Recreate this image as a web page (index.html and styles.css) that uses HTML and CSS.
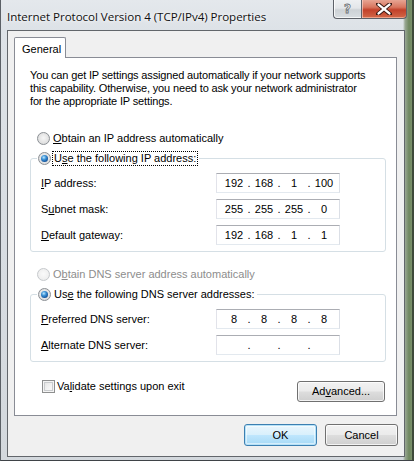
FILE: index.html
```html
<!DOCTYPE html>
<html>
<head>
<meta charset="utf-8">
<title>Internet Protocol Version 4 (TCP/IPv4) Properties</title>
<link rel="stylesheet" href="styles.css">
</head>
<body>
<div class="window">
  <div class="titlebar">
    <span class="title">Internet Protocol Version 4 (TCP/IPv4) Properties</span>
    <div class="caption-btns">
      <div class="cbtn help"><span>?</span></div>
      <div class="cbtn close">
        <svg width="16" height="12" viewBox="0 0 16 12"><path d="M2 1 L14 11 M14 1 L2 11" stroke="#3a1a14" stroke-width="4.2" stroke-linecap="round"/><path d="M2.6 1.6 L13.4 10.4 M13.4 1.6 L2.6 10.4" stroke="#ffffff" stroke-width="2.4" stroke-linecap="round"/></svg>
      </div>
    </div>
  </div>
  <div class="client">
    <div class="tabs"><div class="tab">General</div></div>
    <div class="page">
      <p class="intro">You can get IP settings assigned automatically if your network supports<br>this capability. Otherwise, you need to ask your network administrator<br>for the appropriate IP settings.</p>

      <div class="radio-row first"><span class="radio"></span><span class="rtext"><u>O</u>btain an IP address automatically</span></div>

      <fieldset class="group ip-group">
        <legend><span class="radio checked"></span><span class="rtext focus">U<u>s</u>e the following IP address:</span></legend>
        <div class="fields">
          <span class="flabel"><u>I</u>P address:</span>
          <div class="ipbox"><span class="oct">192</span><span class="dot">.</span><span class="oct">168</span><span class="dot">.</span><span class="oct">1</span><span class="dot">.</span><span class="oct">100</span></div>
          <span class="flabel">S<u>u</u>bnet mask:</span>
          <div class="ipbox"><span class="oct">255</span><span class="dot">.</span><span class="oct">255</span><span class="dot">.</span><span class="oct">255</span><span class="dot">.</span><span class="oct">0</span></div>
          <span class="flabel"><u>D</u>efault gateway:</span>
          <div class="ipbox"><span class="oct">192</span><span class="dot">.</span><span class="oct">168</span><span class="dot">.</span><span class="oct">1</span><span class="dot">.</span><span class="oct">1</span></div>
        </div>
      </fieldset>

      <div class="radio-row dns-auto disabled"><span class="radio"></span><span class="rtext">O<u>b</u>tain DNS server address automatically</span></div>

      <fieldset class="group dns-group">
        <legend><span class="radio checked"></span><span class="rtext">Us<u>e</u> the following DNS server addresses:</span></legend>
        <div class="fields">
          <span class="flabel"><u>P</u>referred DNS server:</span>
          <div class="ipbox"><span class="oct">8</span><span class="dot">.</span><span class="oct">8</span><span class="dot">.</span><span class="oct">8</span><span class="dot">.</span><span class="oct">8</span></div>
          <span class="flabel"><u>A</u>lternate DNS server:</span>
          <div class="ipbox"><span class="oct"></span><span class="dot">.</span><span class="oct"></span><span class="dot">.</span><span class="oct"></span><span class="dot">.</span><span class="oct"></span></div>
        </div>
      </fieldset>

      <div class="bottom-row">
        <div class="check-row"><span class="checkbox"></span><span class="ctext">Va<u>l</u>idate settings upon exit</span></div>
        <div class="btn advanced">Ad<u>v</u>anced...</div>
      </div>
    </div>
    <div class="dialog-buttons">
      <div class="btn default">OK</div>
      <div class="btn">Cancel</div>
    </div>
  </div>
</div>
</body>
</html>
```

FILE: styles.css
```css
* { box-sizing: border-box; }

html, body {
  margin: 0;
  padding: 0;
}

body {
  width: 414px;
  height: 461px;
  overflow: hidden;
  font-family: "Liberation Sans", Arial, sans-serif;
  font-size: 11px;
  color: #000;
}

.window {
  width: 414px;
  height: 461px;
  display: flex;
  flex-direction: column;
  border-left: 1px solid #5b6066;
  border-right: 2px solid #3e4a3a;
  border-bottom: 1px solid #3f4348;
  background:
    linear-gradient(to right, rgba(0,0,0,0) 0, rgba(0,0,0,0) 402px, #9aa894 404px, #6f875f 408px, #7e9470 412px),
    linear-gradient(to bottom, #e4e8ec 0, #dde2e7 30px, #d3d8dd 100%);
  padding-left: 6px;
  padding-right: 7px;
  padding-bottom: 3px;
}

.titlebar {
  height: 30px;
  flex: none;
  display: flex;
  justify-content: space-between;
  align-items: flex-start;
}

.title {
  font-family: "Open Sans", "Liberation Sans", sans-serif;
  font-size: 11.6px;
  color: #111;
  margin-top: 9px;
  margin-left: 0;
  letter-spacing: -0.05px;
  text-shadow: 0 0 6px rgba(255,255,255,0.9), 0 0 3px #fff;
  white-space: nowrap;
}

.caption-btns {
  display: flex;
  margin-right: -2px;
}

.cbtn {
  height: 19px;
  display: flex;
  align-items: center;
  justify-content: center;
  border: 1px solid #5d6168;
  border-top: none;
}

.cbtn.help {
  width: 28px;
  border-right: none;
  border-bottom-left-radius: 4px;
  background: linear-gradient(to bottom, #eef0f2 0, #e3e6e9 45%, #cdd2d6 55%, #d8dde1 100%);
  box-shadow: inset 1px 0 0 rgba(255,255,255,0.8), inset 0 -1px 0 rgba(255,255,255,0.7);
}

.cbtn.help span {
  font-family: "DejaVu Sans", sans-serif;
  font-weight: bold;
  font-size: 12px;
  color: #f4f4f4;
  -webkit-text-stroke: 0.8px #6a6e73;
  margin-top: -1px;
}

.cbtn.close {
  width: 46px;
  border-bottom-right-radius: 4px;
  background: linear-gradient(to bottom, #e7a593 0, #d8765f 40%, #c2412a 55%, #d26848 100%);
  box-shadow: inset 1px 0 0 rgba(255,220,210,0.6), inset 0 -1px 0 rgba(255,200,180,0.6);
}

.client {
  flex: 1;
  background: #f0f0f0;
  border: 1px solid #62666b;
  padding: 6px 7px 0 6px;
  display: flex;
  flex-direction: column;
}

.tabs {
  display: flex;
  height: 20px;
  position: relative;
  z-index: 1;
}

.tab {
  width: 52px;
  height: 21px;
  background: #fff;
  border: 1px solid #898c95;
  border-bottom: none;
  border-radius: 2px 2px 0 0;
  padding: 5px 0 0 7px;
  line-height: 13px;
}

.page {
  height: 359px;
  background: #fff;
  border: 1px solid #898c95;
  padding: 11px 0 0 15px;
  display: flex;
  flex-direction: column;
}

.intro {
  margin: 0;
  line-height: 13px;
  white-space: nowrap;
  letter-spacing: -0.15px;
}

.radio-row {
  display: flex;
  align-items: center;
  height: 15px;
  margin-left: 7px;
}

.radio-row.first { margin-top: 23px; }
.radio-row.dns-auto { margin-top: 15px; }

.radio {
  width: 13px;
  height: 13px;
  flex: none;
  border-radius: 50%;
  border: 1px solid #8b8f94;
  background: radial-gradient(circle at 50% 45%, #f6f6f6 0, #e4e4e4 55%, #cfd2d4 100%);
  display: flex;
  align-items: center;
  justify-content: center;
}

.radio.checked::after {
  content: "";
  width: 7px;
  height: 7px;
  border-radius: 50%;
  background: radial-gradient(circle at 40% 35%, #bfe9ff 0, #3d93d6 35%, #1657a0 70%, #0b3d78 100%);
}

.rtext {
  margin-left: 3px;
  line-height: 13px;
  white-space: nowrap;
}

.rtext.focus {
  outline: 1px dotted #000;
  outline-offset: 0;
  padding: 0 1px;
  margin-left: 2px;
}

.disabled .rtext { color: #8d8d8d; }
.disabled .radio {
  border-color: #c6c9cc;
  background: radial-gradient(circle at 50% 45%, #fafafa 0, #f0f0f0 60%, #e4e5e6 100%);
}

.group {
  margin: 5px 0 0 0;
  width: 356px;
  border: 1px solid #d5dfe5;
  border-radius: 3px;
  padding: 0 0 6px 10px;
  min-width: 0;
}

.group legend {
  display: flex;
  align-items: center;
  height: 15px;
  padding: 0 2px 0 0;
  margin-left: -4px;
}

.group legend .radio { margin-left: 1px; }

.fields {
  display: grid;
  grid-template-columns: 175px 124px;
  grid-auto-rows: 20px;
  row-gap: 6px;
  align-items: center;
  margin-top: 7px;
}

.flabel {
  white-space: nowrap;
  line-height: 13px;
}

.ipbox {
  height: 20px;
  border: 1px solid;
  border-color: #abadb3 #dbdfe6 #e3e9ef #e2e3ea;
  background: #fff;
  display: flex;
  align-items: center;
  padding-left: 4px;
  line-height: 13px;
}

.oct {
  width: 26px;
  text-align: center;
}

.dot {
  width: 4px;
  text-align: center;
}

.bottom-row {
  display: flex;
  justify-content: space-between;
  align-items: flex-start;
  width: 355px;
  margin-top: 18px;
}

.check-row {
  display: flex;
  align-items: center;
  margin-left: 12px;
}

.checkbox {
  width: 13px;
  height: 13px;
  border: 1px solid #8e8f8f;
  background: linear-gradient(135deg, #e0e0e0 0, #f4f4f4 60%, #fbfbfb 100%);
  box-shadow: inset 0 0 0 1px #f4f4f4, inset 0 0 0 2px #c9cbcd;
}

.ctext {
  margin-left: 2px;
  line-height: 13px;
}

.btn {
  height: 21px;
  border: 1px solid #707070;
  border-radius: 3px;
  background: linear-gradient(to bottom, #f2f2f2 0, #ebebeb 48%, #dddddd 52%, #cfcfcf 100%);
  box-shadow: inset 0 0 0 1px rgba(255,255,255,0.75);
  display: flex;
  align-items: center;
  justify-content: center;
  line-height: 13px;
  white-space: nowrap;
}

.btn.advanced {
  width: 88px;
  margin-top: 1px;
  height: 21px;
}

.dialog-buttons {
  display: flex;
  justify-content: flex-end;
  gap: 8px;
  margin-top: 8px;
  margin-right: -1px;
}

.dialog-buttons .btn {
  width: 73px;
  height: 22px;
}

.btn.default {
  border-color: #3c7fb1;
  background: linear-gradient(to bottom, #eaf6fd 0, #d9f0fc 48%, #bee6fd 52%, #a7d9f5 100%);
  box-shadow: inset 0 0 0 1px #b6e2f8, inset 0 0 0 2px rgba(255,255,255,0.5);
}
```
